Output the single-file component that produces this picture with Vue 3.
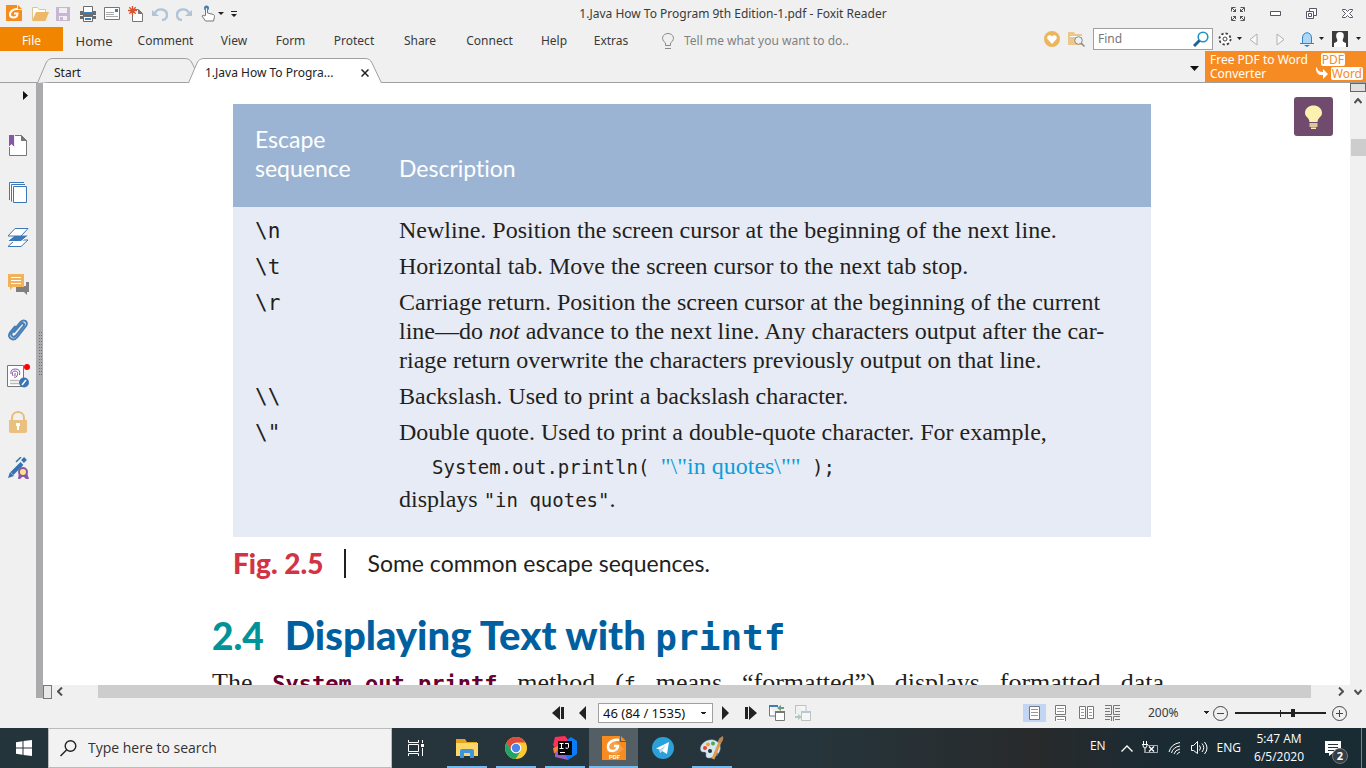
<script setup>
import { ref } from 'vue'

const menus = ['Home', 'Comment', 'View', 'Form', 'Protect', 'Share', 'Connect', 'Help', 'Extras']
const find = ref('')
const search = ref('')
const tell = ref('')
const zoom = ref(64)
</script>

<template>
  <div class="window">
    <header class="titlebar">
      <div class="quick">
        <button class="q q-logo" aria-label="Foxit">
          <svg width="17" height="17" viewBox="0 0 17 17"><path fill="#f68b1f" d="M0 0h11v5h5v11H0z"/><path fill="#f68b1f" d="M12 0l4 4h-4z"/><path d="M11 4C7 4 4 6.500 4 9.500c0 2 1.500 3 3.500 3 2.500 0 4-1.500 4-4H8" fill="none" stroke="#fff" stroke-width="2"/></svg>
        </button>
        <button class="q" aria-label="Open">
          <svg width="17" height="14" viewBox="0 0 17 14"><path fill="#fff" stroke="#e0c48c" d="M.5 12.500V.5h5l1.500 2h6.500v3"/><path fill="#edb968" d="M4 5h13l-3.500 9H0z"/></svg>
        </button>
        <button class="q" aria-label="Save">
          <svg width="14" height="14" viewBox="0 0 14 14"><path fill="#c9b6d6" d="M0 0h14v14H0z"/><path fill="#f0f0f0" d="M3 1h8v5H3zM3 9h8v4H3z"/><path fill="#c9b6d6" d="M4 10h3v3H4z"/></svg>
        </button>
        <button class="q" aria-label="Print">
          <svg width="16" height="16" viewBox="0 0 16 16"><path fill="#6b6b6b" d="M0 5h16v8H0z"/><path fill="#fff" stroke="#6b6b6b" d="M3.500.5h9v6h-9zM3.500 10.500h9v5h-9z"/><path stroke="#3f7db9" stroke-width="2" d="M3 7h10M5 13h6"/><path stroke="#eee" d="M0 9.500h3M13 9.500h3"/></svg>
        </button>
        <button class="q" aria-label="Email">
          <svg width="16" height="13" viewBox="0 0 16 13"><path fill="#fff" stroke="#777" d="M.5.5h15v12H.5z"/><path stroke="#aaa" d="M2 5.500h8M2 7.500h8M2 9.500h12"/><path fill="#3f7db9" d="M11 2h3v3h-3z"/></svg>
        </button>
        <button class="q" aria-label="New">
          <svg width="15" height="16" viewBox="0 0 15 16"><path fill="#fff" stroke="#777" d="M4.500 15.500v-12h6l4 4v8z"/><path fill="#777" d="M10 3l5 5h-5z"/><path stroke="#d9532c" stroke-width="1.300" d="M4.500 0v9M0 4.500h9M1.300 1.300l6.400 6.400M7.700 1.300L1.300 7.700"/></svg>
        </button>
        <button class="q" aria-label="Undo">
          <svg width="16" height="14" viewBox="0 0 16 14"><path fill="none" stroke="#b1c5d9" stroke-width="2.400" d="M3 6c3-6 12-4 12 2 0 3-2 5-5 5"/><path fill="#b1c5d9" d="M0 3v6h7z"/></svg>
        </button>
        <button class="q" aria-label="Redo">
          <svg width="16" height="14" viewBox="0 0 16 14"><path fill="none" stroke="#b1c5d9" stroke-width="2.400" d="M13 6C10 0 1 2 1 8c0 3 2 5 5 5"/><path fill="#b1c5d9" d="M16 3v6H9z"/></svg>
        </button>
        <button class="q hand" aria-label="Touch mode">
          <svg width="23" height="17" viewBox="0 0 23 17"><circle cx="5.500" cy="3" r="2.500" fill="#3f7db9"/><path fill="#fff" stroke="#777" d="M4.500 10V3.500q1-1.500 2 0V8l6 1.500q1 .5 1 2l-1 4.500h-8l-3.500-5q1-1.500 3 0z"/><path fill="#222" d="M17 7h6l-3 3z"/></svg>
        </button>
        <button class="q" aria-label="Customize">
          <svg width="6" height="6" viewBox="0 0 6 6"><path fill="#222" d="M0 0h6v1H0zM0 3h6L3 6z"/></svg>
        </button>
      </div>
      <h1>1.Java How To Program 9th Edition-1.pdf - Foxit Reader</h1>
      <div class="wincontrols">
        <button aria-label="Full screen"><svg width="14" height="14" viewBox="0 0 14 14" fill="none" stroke="#555"><path d="M.5 4.500v-4h4M9.500.5h4v4M13.500 9.500v4h-4M4.500 13.500h-4v-4M1 1l4 4M13 1L9 5M13 13L9 9M1 13l4-4M4.500 2v2.500H2M9.500 2v2.500H12M9.500 12V9.500H12M4.500 12V9.500H2"/></svg></button>
        <button aria-label="Minimize"><svg width="11" height="5" viewBox="0 0 11 5"><path fill="#fff" stroke="#556" d="M.5.5h10v4H.5z"/></svg></button>
        <button aria-label="Restore"><svg width="11" height="11" viewBox="0 0 11 11" fill="#fff" stroke="#556"><path d="M3.500.5h7v7h-7z"/><path d="M.5 3.500h7v7h-7zM2.500 5.500h3v3h-3z"/></svg></button>
        <button aria-label="Close"><svg width="11" height="9" viewBox="0 0 11 9" fill="#fff" stroke="#556"><path d="M.5.5h3l2 2 2-2h3v1l-3 3 3 3v1h-3l-2-2-2 2h-3v-1l3-3-3-3z"/></svg></button>
      </div>
    </header>

    <nav class="ribbon">
      <button class="file">File</button>
      <div class="menus">
        <button v-for="m in menus" :key="m" :class="{ home: m === 'Home' }">{{ m }}</button>
      </div>
      <label class="tell">
        <svg width="12" height="16" viewBox="0 0 12 16" fill="none" stroke="#888"><path d="M3.500 12.500V10C-2 6 1 .5 6 .5s8 5.500 2.500 9.500v2.500zM3 15.500h6"/></svg>
        <input v-model="tell" placeholder="Tell me what you want to do.." aria-label="Tell me what you want to do" />
      </label>
      <div class="tools">
        <button aria-label="Favorites"><svg width="16" height="16" viewBox="0 0 16 16"><circle cx="8" cy="8" r="8" fill="#ecb55f"/><path fill="#fff" d="M8 13L3.500 8C2 5 6 2.500 8 5.500c2-3 6-.5 4.500 2.500z"/></svg></button>
        <button aria-label="Search folder"><svg width="17" height="15" viewBox="0 0 17 15"><path fill="#ecc78b" d="M0 0h6l1 2h7v11H0z"/><path stroke="#fff" d="M2 4.500h12"/><circle cx="10.500" cy="8.500" r="3.800" fill="#f0f0f0" stroke="#888"/><path stroke="#888" stroke-width="1.500" d="M13 11l3.500 3.500"/></svg></button>
        <label class="find">
          <input v-model="find" placeholder="Find" aria-label="Find" />
          <svg width="16" height="16" viewBox="0 0 16 16"><circle cx="10" cy="6" r="4.800" fill="#fff" stroke="#1e93c4" stroke-width="1.600"/><path stroke="#215f9a" stroke-width="3" d="M6.500 9.500L1 15"/></svg>
        </label>
        <button aria-label="Settings"><svg width="24" height="14" viewBox="0 0 24 14"><circle cx="7" cy="7" r="5.500" fill="#fff" stroke="#444" stroke-width="2" stroke-dasharray="2.300 2"/><circle cx="7" cy="7" r="4.500" fill="#fff"/><circle cx="7" cy="7" r="2" fill="none" stroke="#444"/><path fill="#222" d="M19 5h5l-2.500 3z"/></svg></button>
        <button aria-label="Previous"><svg width="9" height="13" viewBox="0 0 9 13"><path fill="#f8f8f8" stroke="#b0b0b0" d="M8 1v11L1 6.500z"/></svg></button>
        <button aria-label="Next"><svg width="9" height="13" viewBox="0 0 9 13"><path fill="#f8f8f8" stroke="#b0b0b0" d="M1 1v11l7-5.500z"/></svg></button>
        <button aria-label="Notifications"><svg width="24" height="15" viewBox="0 0 24 15"><path fill="#aed6f7" stroke="#3185c6" d="M2.500 11.500V6c0-7 9-7 9 0v5.500zM0 11.500h14"/><path fill="#2d7ebd" d="M4 13h6l-3 2z"/><path fill="#222" d="M19 5h5l-2.500 3z"/></svg></button>
        <button aria-label="Account"><svg width="30" height="16" viewBox="0 0 30 16"><path fill="#3c3c3c" d="M0 0h16v16H0z"/><path fill="#fff" d="M8 1c5 0 4 5 3 7-1 2 0 3 3 4v4H2v-4c3-1 4-2 3-4C4 6 3 1 8 1z"/><path fill="#222" d="M24 6h5l-2.500 3z"/></svg></button>
      </div>
    </nav>

    <div class="tabs" role="tablist">
      <button class="tab start" role="tab" aria-selected="false">
        <svg viewBox="0 0 158 25" preserveAspectRatio="none"><path fill="#f0f0f0" stroke="#a0a0a0" d="M.5 25L9 5q2-4.500 7-4.500h132q5 0 7 4.500l3 6"/></svg>
        <span>Start</span>
      </button>
      <button class="tab active" role="tab" aria-selected="true">
        <svg viewBox="0 0 194 25" preserveAspectRatio="none"><path fill="#fff" stroke="#a0a0a0" d="M.5 25L9 5q2-4.500 7-4.500h161q5 0 7 4.500l9.500 20"/></svg>
        <span>1.Java How To Progra...</span>
        <svg class="x" width="8" height="8" viewBox="0 0 8 8"><path stroke="#222" stroke-width="1.500" d="M.5.5l7 7M7.500.5l-7 7"/></svg>
      </button>
      <button class="more" aria-label="All tabs"><svg width="9" height="5" viewBox="0 0 9 5"><path fill="#111" d="M0 0h9L4.500 5z"/></svg></button>
      <a class="promo" href="#">
        <span>Free PDF to Word<br />Converter</span>
        <span class="tags"><b>PDF</b><span class="w"><svg width="13" height="12" viewBox="0 0 13 12"><path fill="#fff" d="M1 0q0 5 6 5V2l5 5-5 5V8Q0 9 0 1z"/></svg><b>Word</b></span></span>
      </a>
    </div>

    <main class="main">
      <aside class="side">
        <button class="expand" aria-label="Expand"><svg width="5" height="9" viewBox="0 0 5 9"><path fill="#111" d="M0 0l5 4.500L0 9z"/></svg></button>
        <button aria-label="Bookmarks"><svg width="18" height="22" viewBox="0 0 18 22"><path fill="#fff" stroke="#777" d="M.5.5h12l5 5v15H.5z"/><path fill="#777" d="M12 0l6 6h-6z"/><path fill="#8659a5" stroke="#f0f0f0" d="M-.5-.5h6v13l-3-3-3 3z"/></svg></button>
        <button aria-label="Pages"><svg width="18" height="21" viewBox="0 0 18 21" fill="#fff" stroke="#3d77b5"><path d="M.5 18V.5H15M2.500 19.500v-17H16"/><path d="M4.500 4.500h13v16h-13z"/></svg></button>
        <button aria-label="Layers"><svg width="22" height="20" viewBox="0 0 22 20"><path fill="#fff" stroke="#3d77b5" d="M1 18.500l7-6.500h13l-7 6.500z"/><path fill="#3d77b5" stroke="#fff" d="M0 13.500L8 7h14l-8 6.500z"/><path fill="#fff" stroke="#3d77b5" d="M1 8l7-7.500h13L14 8z"/></svg></button>
        <button aria-label="Comments"><svg width="21" height="21" viewBox="0 0 21 21"><path fill="#808080" d="M8 12h10V8h3v10h-2v3l-3-3H8z"/><path fill="#f0b25b" d="M0 0h16v13H5l-3 3v-3H0z"/><path stroke="#fff" d="M3 3.500h10M3 6.500h10M3 9.500h10"/></svg></button>
        <button aria-label="Attachments"><svg width="20" height="22" viewBox="0 0 20 22"><path fill="none" stroke="#4a80b8" stroke-width="2" stroke-linecap="round" d="M6 13l7-8c2-2 4 0 2.500 2L8 16.500c-2.500 3-6 0-4-3L12 3.500c3-4 9-1.500 6 3.500l-8.500 11c-4 5-11 1-7.500-4.500l5-6"/></svg></button>
        <button aria-label="Signatures"><svg width="23" height="24" viewBox="0 0 23 24"><path fill="#fff" stroke="#777" d="M.5 1.500h16v21H.5z"/><path fill="none" stroke="#8659a5" d="M4 10q-1-5 4.500-5t4 6M6 12q-2-5 2-5t2 5q-1 2-3 1M8 9v3"/><path stroke="#bbb" stroke-width="1.500" d="M3 16.500h9M3 19.500h9"/><circle cx="17" cy="18.500" r="5" fill="#3975b4"/><path stroke="#fff" stroke-width="1.500" d="M15 21l4-5"/><circle cx="20" cy="3" r="3" fill="#f00"/></svg></button>
        <button aria-label="Security"><svg width="18" height="22" viewBox="0 0 18 22"><path fill="none" stroke="#e9bc78" stroke-width="2" d="M3 10V7c0-8 12-8 12 0v3"/><path fill="#eac07f" d="M0 9h18v11q0 2-2 2H2q-2 0-2-2z"/><path fill="#fff" d="M7 12h4v3h-1v4H8v-4H7z"/></svg></button>
        <button aria-label="Sign"><svg width="21" height="22" viewBox="0 0 21 22"><path stroke="#3471b0" stroke-width="4" d="M4 16.500L14 6.500M14.500 4.500l3-3"/><path fill="#3471b0" d="M0 21l2-6 4 4z"/><path stroke="#3471b0" stroke-width="1.500" d="M8 5l5-5"/><path fill="#8659a5" d="M11 16h8l2 6h-3l-3-3-3 3h-2z"/><circle cx="15" cy="15" r="4" fill="#ffe28a" stroke="#8659a5" stroke-width="2"/></svg></button>
      </aside>
      <div class="splitter"><svg width="5" height="44" viewBox="0 0 5 44"><path stroke="#707070" stroke-dasharray="1 2" d="M1.500 0v44M3.500 0v44"/></svg></div>

      <div class="viewer">
        <div class="docrow">
          <article class="page">
            <table class="escapes">
              <thead>
                <tr><th>Escape<br />sequence</th><th>Description</th></tr>
              </thead>
              <tbody>
                <tr><td class="code">\n</td><td>Newline. Position the screen cursor at the beginning of the next line.</td></tr>
                <tr><td class="code">\t</td><td>Horizontal tab. Move the screen cursor to the next tab stop.</td></tr>
                <tr><td class="code">\r</td><td>Carriage return. Position the screen cursor at the beginning of the current<br />line—do <i>not</i> advance to the next line. Any characters output after the car-<br />riage return overwrite the characters previously output on that line.</td></tr>
                <tr><td class="code">\\</td><td>Backslash. Used to print a backslash character.</td></tr>
                <tr><td class="code">\"</td><td>Double quote. Used to print a double-quote character. For example,
                  <div class="example"><code>System.out.println( </code><span>"\"in quotes\""</span><code> );</code></div>
                  displays <code>"in quotes"</code>.</td></tr>
              </tbody>
            </table>
            <p class="caption"><b>Fig. 2.5</b><span class="bar"></span>Some common escape sequences.</p>
            <h2><span class="num">2.4</span>Displaying Text with <code>printf</code></h2>
            <p class="para">The <code class="term">System.out.printf</code> method (<code>f</code> means “formatted”) displays formatted data</p>
          </article>
          <button class="tip" aria-label="Tips"><svg width="17" height="24" viewBox="0 0 17 24"><path fill="#fdf1b0" d="M4.500 17C4 12 0 12 0 8c0-10 17-10 17 0 0 4-4 4-4.500 9z"/><path stroke="#fdf1b0" stroke-width="1.500" d="M4.500 19h8M4.500 21h8M6 23.300h5"/></svg></button>
        </div>
        <div class="hscroll">
          <i class="box"></i>
          <svg width="6" height="9" viewBox="0 0 6 9"><path fill="none" stroke="#505050" stroke-width="2" d="M5 .5l-4 4 4 4"/></svg>
          <i class="thumb"></i>
          <svg width="6" height="9" viewBox="0 0 6 9"><path fill="none" stroke="#505050" stroke-width="2" d="M1 .5l4 4-4 4"/></svg>
        </div>
      </div>
      <div class="vscroll">
        <i class="box"></i>
        <svg width="8" height="6" viewBox="0 0 8 6"><path fill="none" stroke="#505050" stroke-width="2" d="M.5 5l3.500-4 3.500 4"/></svg>
        <i class="thumb"></i>
        <svg width="8" height="6" viewBox="0 0 8 6"><path fill="none" stroke="#505050" stroke-width="2" d="M.5 1L4 5l3.500-4"/></svg>
      </div>
    </main>

    <footer class="status">
      <div class="pager">
        <button aria-label="First page"><svg width="12" height="14" viewBox="0 0 12 14"><path fill="#222" d="M8 0v14L0 7zM9 1h3v12H9z"/></svg></button>
        <button aria-label="Previous page"><svg width="7" height="14" viewBox="0 0 7 14"><path fill="#222" d="M7 0v14L0 7z"/></svg></button>
        <select aria-label="Page"><option>46 (84 / 1535)</option></select>
        <button aria-label="Next page"><svg width="7" height="14" viewBox="0 0 7 14"><path fill="#222" d="M0 0v14l7-7z"/></svg></button>
        <button aria-label="Last page"><svg width="12" height="14" viewBox="0 0 12 14"><path fill="#222" d="M4 0v14l8-7zM0 1h3v12H0z"/></svg></button>
        <button aria-label="Previous view"><svg width="17" height="16" viewBox="0 0 17 16"><path fill="#fff" stroke="#777" d="M.5 1v10H6M.5.500H9"/><path stroke="#3f7db9" stroke-width="2" d="M0 1h9"/><path fill="#fff" stroke="#777" d="M6.500 7.500h9v8h-9z"/><path stroke="#777" stroke-width="2" d="M6 7h10"/><path stroke="#6a9c80" stroke-width="2" d="M10 3h5"/><path fill="#6a9c80" d="M8 3l4-3v6z"/></svg></button>
        <button aria-label="Next view"><svg width="17" height="16" viewBox="0 0 17 16" opacity=".45"><path fill="#fff" stroke="#888" d="M.5.5H11V6M.5 0v9"/><path fill="#fff" stroke="#888" d="M6.500 7.500h9v8h-9z"/><path stroke="#6b9cc5" stroke-width="2" d="M6 7h10"/><path stroke="#6a9c80" stroke-width="2" d="M0 12h4"/><path fill="#6a9c80" d="M7 12L3 9v6z"/></svg></button>
      </div>
      <div class="views">
        <button class="on" aria-label="Single page"><svg width="11" height="14" viewBox="0 0 11 14"><path fill="#fff" stroke="#777" d="M.5.5h10v13H.5z"/><path stroke="#999" d="M2 3.500h7M2 6.500h7M2 9.500h7"/></svg></button>
        <button aria-label="Continuous"><svg width="11" height="16" viewBox="0 0 11 16"><path fill="#fff" stroke="#777" d="M.5.5h10v9H.5zM.5 16v-4.500h10V16"/><path stroke="#999" d="M2 3.500h7M2 6.500h7M2 14.500h7"/></svg></button>
        <button aria-label="Facing"><svg width="15" height="14" viewBox="0 0 15 14"><path fill="#fff" stroke="#777" d="M.5.5h6v12h-6zM8.500.5h6v12h-6z"/><path stroke="#999" d="M2 3.500h3M2 6.500h3M2 9.500h3M10 3.500h3M10 6.500h3M10 9.500h3"/></svg></button>
        <button aria-label="Continuous facing"><svg width="15" height="16" viewBox="0 0 15 16"><path fill="none" stroke="#777" d="M0 .5h6.500v9H0M15 .5H8.500v9H15M0 11.500h6.500V16M15 11.500H8.500V16M0 3.500h5M0 6.500h5M10 3.500h5M10 6.500h5M0 14.500h5M10 14.500h5"/></svg></button>
      </div>
      <select class="pct" aria-label="Zoom"><option>200%</option></select>
      <button aria-label="Zoom out"><svg width="15" height="15" viewBox="0 0 15 15" fill="none" stroke="#444"><circle cx="7.500" cy="7.500" r="7"/><path d="M4 7.500h7"/></svg></button>
      <input v-model="zoom" class="slider" type="range" min="0" max="100" aria-label="Zoom level" />
      <button aria-label="Zoom in"><svg width="15" height="15" viewBox="0 0 15 15" fill="none" stroke="#444"><circle cx="7.500" cy="7.500" r="7"/><path d="M4 7.500h7M7.500 4v7"/></svg></button>
    </footer>

    <section class="taskbar">
      <button class="win" aria-label="Start menu"><svg width="16" height="16" viewBox="0 0 16 16" fill="#fff"><path d="M0 2.200L6.500 1.300v6.200H0zM7.500 1.100L16 0v7.500H7.500zM0 8.500h6.500v6.200L0 13.800zM7.500 8.500H16V16l-8.500-1.100z"/></svg></button>
      <label class="search">
        <svg width="17" height="17" viewBox="0 0 17 17" fill="none" stroke="#222" stroke-width="1.400"><circle cx="10.500" cy="6" r="5.300"/><path d="M6.500 10L.5 16"/></svg>
        <input v-model="search" placeholder="Type here to search" aria-label="Type here to search" />
      </label>
      <button class="app view" aria-label="Task view"><svg width="17" height="16" viewBox="0 0 17 16" fill="none" stroke="#fff"><path d="M.5 0v2.500h10V0M.5 4.500h10v7H.5zM.5 16v-2.500h10V16M14.500 0v3M14.500 8v8"/><path fill="#fff" stroke="none" d="M13 4h3v3h-3z"/></svg></button>
      <button class="app run" aria-label="File Explorer"><svg width="22" height="19" viewBox="0 0 22 19"><path fill="#e2a520" d="M0 0h9l2 3h10v5H0z"/><path fill="#fcd667" d="M0 4h22v13H0z"/><path fill="#3e95dc" d="M4 19v-7q0-2 2-2h10q2 0 2 2v7h-4v-5H8v5z"/></svg></button>
      <button class="app run" aria-label="Chrome"><svg width="22" height="22" viewBox="0 0 22 22"><circle cx="11" cy="11" r="11" fill="#fbc92f"/><path fill="#dd4b3e" d="M1.500 5.500A11 11 0 0 1 20.500 5.500H11L6 14z"/><path fill="#22a464" d="M1.500 5.500L6.200 13.700 11 16.500 15 15 10.500 22A11 11 0 0 1 1.500 5.500z"/><circle cx="11" cy="11" r="5.300" fill="#fff"/><circle cx="11" cy="11" r="4.200" fill="#4a86ed"/></svg></button>
      <button class="app run" aria-label="IntelliJ IDEA"><svg width="24" height="24" viewBox="0 0 24 24"><path fill="#fe315d" d="M2 1l10-1 4 5-12 9-4-5z"/><path fill="#f5832a" d="M0 12l5-2v8l-4-1z"/><path fill="#087cfa" d="M14 4l4-3 6 4v13l-9 6-6-5z"/><path fill="#9d5bc8" d="M2 17l6-7 7 14-13-3z"/><path fill="#08070b" d="M5 5h14v14H5z"/><path fill="none" stroke="#fff" d="M6.500 7.500h4M8.500 7.500v5M6.500 12.500h4M12 7.500h3.500v4q-1 1.500-3 .5"/><path stroke="#fff" d="M7 16.500h5"/></svg></button>
      <button class="app focus" aria-label="Foxit Reader"><svg width="24" height="24" viewBox="0 0 24 24"><path fill="#f68b1f" d="M0 0h18v6h6v18H0z"/><path fill="#f68b1f" d="M19 0l5 5h-5z"/><path fill="#fbb36a" d="M12 4l10 9-8 6-10-4z" opacity=".5"/><path fill="none" stroke="#fff" stroke-width="2.500" d="M17 4C10 3 6 7 6 11c0 3 2 4 4.500 4C14 15 16 12 16 10h-4"/><text x="7" y="23" fill="#fff" font-family="Roboto, sans-serif" font-weight="700" font-size="6">PDF</text></svg></button>
      <button class="app" aria-label="Telegram"><svg width="22" height="22" viewBox="0 0 22 22"><circle cx="11" cy="11" r="11" fill="#2ba1da"/><path fill="#fff" d="M4 11.500L17 5l-2 12-5-3-2 2-.5-3.500z"/><path fill="#b6d9ee" d="M7.500 12.500L14 8l-4 6-2 2z"/></svg></button>
      <button class="app run" aria-label="Paint"><svg width="25" height="24" viewBox="0 0 25 24"><path fill="#d6e7f2" stroke="#91afc2" stroke-width=".5" d="M2 15C-1 8 10 1 17 5c8 4 4 16-6 17-7 0-2-5-5-6-2 0-3 0-4-1z"/><circle cx="6" cy="12" r="2" fill="#df4634"/><circle cx="9" cy="8.500" r="2" fill="#f0a52f"/><circle cx="14" cy="7.500" r="2" fill="#4cab48"/><circle cx="11" cy="15" r="2" fill="#26343b"/><circle cx="17" cy="18" r="2" fill="#3388cf"/><path stroke="#df9b4e" stroke-width="3" d="M14 23L21 6"/><path fill="#b78458" d="M19 6q0-4 5-6 1 4-2 7z"/></svg></button>
      <div class="tray">
        <span class="en">EN</span>
        <svg width="12" height="7" viewBox="0 0 12 7" fill="none" stroke="#fff" stroke-width="1.400"><path d="M.5 6.500L6 1l5.500 5.500"/></svg>
        <svg width="17" height="14" viewBox="0 0 17 14" fill="none" stroke="#fff"><path d="M4 11.500h11.500v-7H6" opacity=".6"/><path d="M1.500 0v3M4.500 0v3M0 3.500h6M1 4q0 3 2 3t2-3M3 7v5"/><path stroke-width="1.400" d="M7 5.500l5 5M12 5.500l-5 5"/></svg>
        <svg width="14" height="14" viewBox="0 0 14 14" fill="none" stroke="#fff"><path d="M1 11Q3 3 12 1.500M3.500 12Q5 6 12 5M6 13q1-4 6-5M9 13.500q1-2 3-2.500"/></svg>
        <svg width="17" height="14" viewBox="0 0 17 14" fill="none" stroke="#fff"><path d="M.5 4.500h2l4-4v12l-4-3h-2zM8.500 4.500q2 2.500 0 5M11 2.500q3.500 4 0 8.500M13.500 1q5 6 0 12"/></svg>
        <span class="eng">ENG</span>
        <time>5:47 AM<br />6/5/2020</time>
        <span class="note"><svg width="17" height="15" viewBox="0 0 17 15"><path fill="#fff" d="M0 0h16v12H8l-4 3v-3H0z"/><path stroke="#26343b" d="M3 3.500h10M3 6.500h10M3 9.500h6"/></svg><b>2</b></span>
      </div>
    </section>
  </div>
</template>

<style>
html, body { margin: 0; overflow: hidden; }
</style>

<style scoped>
* { box-sizing: border-box; }
.window { height: 100vh; display: flex; flex-direction: column; background: #f0f0f0; font: 12px/16px "Noto Sans", sans-serif; color: #3a3a3a; }
button { border: 0; background: none; padding: 0; margin: 0; font: inherit; color: inherit; display: flex; align-items: center; justify-content: center; flex: none; }
input, select { font: inherit; color: inherit; border: 0; background: none; padding: 0; margin: 0; outline: 0; min-width: 0; appearance: none; }
svg { display: block; flex: none; }
h1, h2, p { margin: 0; font-weight: 400; }

.titlebar { flex: none; height: 27px; display: flex; align-items: center; position: relative; justify-content: space-between; }
.quick { display: flex; align-items: center; padding-left: 6px; }
.q { width: 24px; height: 26px; justify-content: flex-start; }
.q-logo { width: 26px; }
.q.hand { width: 30px; margin-left: 1px; }
.titlebar h1 { font-size: 12px; position: absolute; left: 100px; right: 0; text-align: center; pointer-events: none; }
.wincontrols { display: flex; align-items: center; gap: 25px; padding-right: 13px; position: relative; }

.ribbon { flex: none; height: 24px; display: flex; align-items: stretch; }
.file { width: 63px; background: #f28500; color: #fff; padding-top: 3px; }
.menus { display: grid; grid-template-columns: 62px 81px 56px 57px 70px 62px 77px 52px 62px; padding-top: 3px; }
.menus .home { font-size: 13px; }
.tell { display: flex; align-items: center; gap: 10px; padding: 3px 0 0 20px; }
.tell input { width: 200px; }
.tell input::placeholder { color: #808080; opacity: 1; }
.tools { margin-left: auto; display: flex; align-items: center; gap: 8px; padding: 0 4px 0 0; }
.find { display: flex; align-items: center; width: 120px; height: 22px; background: #fff; border: 1px solid #a0a0a0; padding: 0 3px 0 4px; margin-right: -3px; }
.find input { flex: 1; }
.find input::placeholder { color: #777; opacity: 1; }
.tools button:nth-of-type(4), .tools button:nth-of-type(5) { width: 15px; }
.tools button:nth-of-type(5) { margin-right: 4px; }
.tools button:nth-of-type(3) { margin-right: -4px; }
.tools button:nth-of-type(4) { margin-right: 4px; }

.tabs { flex: none; height: 32px; display: flex; align-items: flex-end; border-bottom: 1px solid #a0a0a0; padding-left: 37px; }
.tab { position: relative; height: 24px; justify-content: flex-start; padding: 5px 16px 0 17px; color: #222; }
.tab > svg:first-child { position: absolute; left: 0; top: 0; width: 100%; height: 25px; }
.tab span { position: relative; }
.start { width: 158px; }
.active { width: 194px; margin-left: -7px; justify-content: space-between; padding-right: 13px; }
.x { position: relative; }
.more { margin-left: auto; width: 22px; height: 28px; }
.promo { width: 161px; height: 31px; background: #f68b24; color: #fff; text-decoration: none; font: 12px/14px "Noto Sans", sans-serif; padding: 2px 3px 0 5px; white-space: nowrap; display: flex; justify-content: space-between; }
.tags { display: flex; flex-direction: column; align-items: flex-end; }
.tags b { font-weight: 400; background: #fff; color: #f68b24; border-radius: 2px; padding: 0 1px; line-height: 13px; height: 13px; }
.tags > b { margin-right: 18px; }
.w { display: flex; gap: 2px; margin-top: 1px; }

.main { flex: 1; min-height: 0; display: flex; }
.side { width: 36px; flex: none; display: flex; flex-direction: column; align-items: stretch; }
.side button { height: 46px; }
.side .expand { height: 40px; padding-left: 14px; padding-bottom: 15px; }
.splitter { width: 7px; flex: none; background: #ababad; padding: 249px 1px 0 2px; }
.viewer { flex: 1; min-width: 0; display: flex; flex-direction: column; background: #fff; }
.docrow { flex: 1; min-height: 0; overflow: hidden; position: relative; }
.page { padding: 21px 186px 0 169px; color: #231f20; white-space: nowrap; }
.tip { position: absolute; right: 17px; top: 14px; width: 39px; height: 39px; border-radius: 3px; background: #714b6e; }

.escapes { margin-left: 21px; width: calc(100% - 34px); border-collapse: collapse; background: #e7ebf5; font: 24px/29px "Liberation Serif", serif; table-layout: fixed; }
th { background: #9cb4d3; color: #fff; font: 23px/29px Lato, sans-serif; font-variant-ligatures: none; text-align: left; vertical-align: bottom; height: 103px; padding: 0 0 24px; }
th:first-child, td:first-child { padding-left: 22px; width: 166px; }
td { padding: 0 0 7px; vertical-align: top; }
tbody tr:first-child td { padding-top: 9px; }
tbody tr:last-child td { padding-bottom: 22px; }
code, .code { font-family: "DejaVu Sans Mono", monospace; }
.code { font-size: 21px; line-height: 31px; padding-bottom: 5px; }
td code { font-size: 19px; white-space: pre; }
.example { padding-left: 33px; line-height: 38px; height: 38px; }
.example span { color: #0c9ddb; }
.caption { margin: 12px 0 0 21px; font: 23px/29px Lato, sans-serif; display: flex; align-items: center; }
.caption b { color: #d13444; font-weight: 900; font-size: 28px; }
.bar { width: 2px; height: 29px; background: #231f20; margin: 0 21px; }
h2 { font: 900 40px/44px Lato, sans-serif; color: #00609f; margin-top: 35px; }
h2 .num { color: #00939a; margin-right: 21px; font-size: 37px; }
h2 code { font-size: 36px; font-weight: 700; }
.para { font: 26px/30px "Liberation Serif", serif; margin-top: 8px; text-align: justify; text-align-last: justify; }
.para code { font-size: 20px; }
.para .term { color: #65002f; font-weight: 700; font-size: 22px; }

.hscroll { flex: none; height: 13px; display: flex; align-items: center; background: #f0f0f0; gap: 5px; padding-right: 6px; }
.hscroll .box { width: 9px; height: 14px; border: 1px solid #777; background: #e8e8e8; }
.hscroll .thumb { flex: 1; height: 13px; background: #cdcdcd; margin: 0 22px 0 30px; }
.vscroll { width: 16px; flex: none; display: flex; flex-direction: column; align-items: center; }
.vscroll .box { width: 16px; height: 9px; border: 1px solid #666; background: #e0e0e0; margin-bottom: 6px; flex: none; }
.vscroll .thumb { width: 15px; height: 17px; background: #cdcdcd; margin: 35px 0 auto; }
.vscroll svg:last-child { margin-bottom: 3px; }

.status { flex: none; height: 30px; display: flex; align-items: center; position: relative; padding: 0 19px 0 0; justify-content: flex-end; }
.pager { display: flex; align-items: center; margin-right: auto; padding-left: 552px; }
.pager button:nth-of-type(1) { margin-right: 15px; }
.pager select { width: 115px; height: 20px; border: 1px solid #a0a0a0; background: linear-gradient(#222, #222) no-repeat right 8px center / 1px 2px, linear-gradient(#222, #222) no-repeat right 7px top 8px / 3px 2px, linear-gradient(#222, #222) no-repeat right 6px top 8px / 5px 1px, #fff; margin: 0 9px 0 12px; padding-left: 4px; color: #111; font-size: 13px; }
.pager button:nth-of-type(3) { margin-right: 16px; }
.pager button:nth-of-type(4) { margin-right: 12px; }
.pager button:nth-of-type(5) { margin-right: 9px; }
.views { display: flex; align-items: center; gap: 3px; margin-right: 24px; }
.views button { width: 23px; height: 18px; }
.views .on { background: #c2d5f2; }
.pct { width: 61px; margin-right: 4px; padding-left: 0; background: linear-gradient(#222, #222) no-repeat right 2px top 8px / 1px 1px, linear-gradient(#222, #222) no-repeat right 1px top 7px / 3px 1px, linear-gradient(#222, #222) no-repeat right 0 top 6px / 5px 1px; }
.slider { width: 91px; height: 14px; margin: 0 6px 0 7px; background: linear-gradient(#222, #222) no-repeat center / 100% 2px, linear-gradient(#222, #222) no-repeat center / 1px 7px; }
.slider::-webkit-slider-thumb { appearance: none; width: 4px; height: 8px; background: #222; }

.taskbar { flex: none; height: 40px; display: flex; align-items: stretch; background: linear-gradient(90deg, #24343b, #26353b 60%, #282a2b 76%, #1c2b33 84%, #192b33); font-family: "Open Sans", sans-serif; color: #fff; }
.win { width: 48px; }
.search { width: 344px; background: #f2f2f2; border: 1px solid #bbb; display: flex; align-items: center; gap: 11px; padding-left: 11px; }
.search input { flex: 1; font-size: 14px; line-height: 20px; }
.search input::placeholder { color: #333; opacity: 1; }
.app { width: 49px; position: relative; }
.view { width: 48px; margin-right: 2px; }
.run::after, .focus::after { content: ""; position: absolute; left: 5px; right: 4px; bottom: 0; height: 2px; background: #76b9ed; }
.focus { background: #535e65; }
.focus::after { left: 0; right: 0; }
.tray { margin-left: auto; display: flex; align-items: center; gap: 9px; padding-right: 15px; position: relative; }
.tray::after { content: ""; position: absolute; right: 4px; top: 0; bottom: 0; width: 1px; background: #76828a; }
.en { padding-bottom: 4px; margin-right: 6px; }
time { text-align: center; line-height: 18px; margin-left: 4px; }
.note { position: relative; margin-left: 12px; width: 26px; }
.note b { position: absolute; left: 7px; top: 7px; width: 16px; height: 16px; border-radius: 8px; background: #343f45; border: 1px solid #777; text-align: center; font-size: 11px; line-height: 14px; }
</style>
